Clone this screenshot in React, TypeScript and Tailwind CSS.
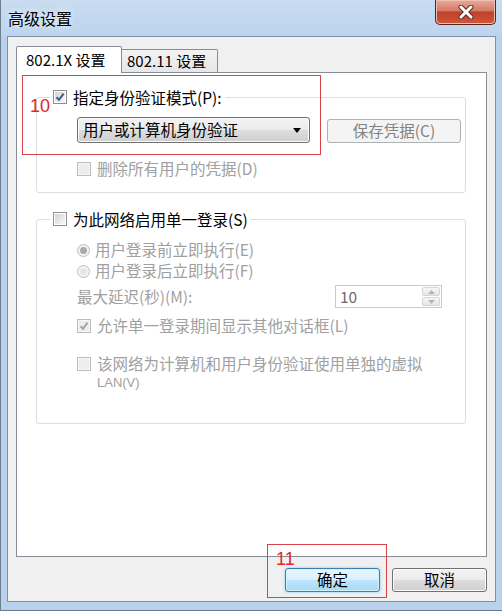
import React from 'react'

const FONT = '"Noto Sans CJK SC", "Liberation Sans", sans-serif'

function CheckBox({ checked = false, disabled = false }: { checked?: boolean; disabled?: boolean }) {
  return (
    <span
      className={`relative flex h-[14px] w-[14px] shrink-0 items-center justify-center border ${
        disabled ? 'border-[#bcbcbc] bg-[#f6f6f6]' : 'border-[#8e8f8f] bg-white'
      }`}
    >
      <span
        className={`h-[10px] w-[10px] ${
          disabled ? 'bg-[#ededed]' : 'bg-[linear-gradient(135deg,#d4d4d4,#f8f8f8)]'
        }`}
      />
      {checked && (
        <svg className="absolute left-0 top-0" width="12" height="12" viewBox="0 0 12 12">
          <path
            d="M2.5 6.2 L5 8.8 L9.6 2.6"
            fill="none"
            stroke={disabled ? '#a3a3a3' : '#3b5a91'}
            strokeWidth="2"
          />
        </svg>
      )}
    </span>
  )
}

function Radio({ checked = false }: { checked?: boolean }) {
  return (
    <span className="flex h-[13px] w-[13px] shrink-0 items-center justify-center rounded-full border border-[#bdbdbd] bg-[#f3f3f3]">
      <span
        className={`h-[7px] w-[7px] rounded-full ${checked ? 'bg-[#a9a9a9]' : 'bg-[#e6e6e6]'}`}
      />
    </span>
  )
}

export default function App() {
  return (
    <div
      className="relative flex h-[611px] w-[502px] flex-col overflow-hidden border-b border-l border-[#6c7d8f] bg-[#b9d2ec] text-[15.5px] text-black"
      style={{ fontFamily: FONT }}
    >
      {/* title bar */}
      <div className="flex h-[36px] shrink-0 items-start justify-between bg-[linear-gradient(#c9dcf0,#bcd4ee)] pl-[7px] pr-[6px]">
        <div className="mt-[8px] text-[16px] leading-[20px] [text-shadow:0_0_6px_#fff]">高级设置</div>
        <div className="flex h-[25px] w-[61px] items-center justify-center rounded-b-[5px] border border-t-0 border-[#5a2219] bg-[linear-gradient(#e9a99b,#d47a66_45%,#c0402a_50%,#d0573c)] shadow-[inset_0_0_0_1px_#eec0b4]">
          <svg width="16" height="14" viewBox="0 0 16 14">
            <path d="M3 2 L13 12 M13 2 L3 12" stroke="#5b2a22" strokeWidth="5" strokeLinecap="round" />
            <path d="M3 2 L13 12 M13 2 L3 12" stroke="#ffffff" strokeWidth="3" strokeLinecap="round" />
          </svg>
        </div>
      </div>

      {/* client area */}
      <div className="mx-[6px] mb-[8px] flex flex-1 flex-col border border-[#7f90a2] bg-[#f0f0f0] px-[8px] pb-[9px] pt-[9px]">
        {/* tabs */}
        <div className="relative z-10 mb-[-1px] flex h-[27px] items-end text-[15px]">
          <div className="flex h-[27px] w-[106px] items-center rounded-t-[2px] border border-b-0 border-[#898c95] bg-white pl-[9px] leading-[18px]">
            802.1X 设置
          </div>
          <div className="mb-[1px] flex h-[23px] w-[96px] items-center rounded-tr-[2px] border border-b-0 border-l-0 border-[#898c95] bg-[linear-gradient(#f3f3f3,#e6e6e6)] pl-[5px] leading-[18px]">
            802.11 设置
          </div>
        </div>

        {/* tab panel */}
        <div className="flex-1 border border-[#898c95] bg-white pl-[19px] pt-[15px]">
          <fieldset className="m-0 w-[430px] rounded-[3px] border border-[#d5dfe5] p-0">
            <legend className="ml-[13px] flex h-[18px] items-center gap-[6px] px-[3px] leading-[18px]">
              <CheckBox checked />
              <span>指定身份验证模式(P):</span>
            </legend>
            <div className="pb-[14px] pl-[40px] pt-[11px]">
              <div className="flex items-end gap-[17px]">
                <div className="flex h-[26px] w-[233px] items-center justify-between rounded-[3px] border border-[#707070] bg-[linear-gradient(#f2f2f2,#ebebeb_50%,#dddddd_50%,#cfcfcf)] pl-[5px] pr-[8px] shadow-[inset_0_0_0_1px_#fbfbfb]">
                  <span>用户或计算机身份验证</span>
                  <svg width="8" height="5" viewBox="0 0 8 5">
                    <path d="M0 0 H8 L4 5 Z" fill="#000" />
                  </svg>
                </div>
                <div className="flex h-[24px] w-[134px] items-center justify-center rounded-[3px] border border-[#adb2b5] bg-[#f4f4f4] text-[#838383]">
                  保存凭据(C)
                </div>
              </div>
              <div className="mt-[17px] flex h-[18px] items-center gap-[6px] text-[#a0a0a0]">
                <CheckBox disabled />
                <span>删除所有用户的凭据(D)</span>
              </div>
            </div>
          </fieldset>

          <fieldset className="m-0 mt-[17px] w-[430px] rounded-[3px] border border-[#d5dfe5] p-0">
            <legend className="ml-[13px] flex h-[18px] items-center gap-[6px] px-[3px] leading-[18px]">
              <CheckBox />
              <span>为此网络启用单一登录(S)</span>
            </legend>
            <div className="pb-[33px] pl-[40px] pr-[23px] pt-[13px] text-[#a0a0a0]">
              <div className="flex h-[18px] items-center gap-[5px]">
                <Radio checked />
                <span>用户登录前立即执行(E)</span>
              </div>
              <div className="mt-[3px] flex h-[18px] items-center gap-[5px]">
                <Radio />
                <span>用户登录后立即执行(F)</span>
              </div>
              <div className="mt-[5px] flex h-[23px] items-center justify-between">
                <span>最大延迟(秒)(M):</span>
                <div className="flex h-[23px] w-[107px] items-stretch border border-[#c9cbce] bg-white">
                  <span className="flex flex-1 items-center pl-[4px] text-[#6a6a6a]">10</span>
                  <div className="my-[1px] mr-[1px] flex w-[18px] flex-col gap-[1px]">
                    <div className="flex flex-1 items-center justify-center rounded-[2px] border border-[#d6d6d6] bg-[linear-gradient(#f6f6f6,#e6e6e6)]">
                      <svg width="7" height="4" viewBox="0 0 7 4">
                        <path d="M0 4 L3.5 0 L7 4 Z" fill="#b4b4b4" />
                      </svg>
                    </div>
                    <div className="flex flex-1 items-center justify-center rounded-[2px] border border-[#d6d6d6] bg-[linear-gradient(#f6f6f6,#e6e6e6)]">
                      <svg width="7" height="4" viewBox="0 0 7 4">
                        <path d="M0 0 H7 L3.5 4 Z" fill="#b4b4b4" />
                      </svg>
                    </div>
                  </div>
                </div>
              </div>
              <div className="mt-[9px] flex h-[18px] items-center gap-[6px]">
                <CheckBox checked disabled />
                <span>允许单一登录期间显示其他对话框(L)</span>
              </div>
              <div className="mt-[20px] flex items-start gap-[6px]">
                <span className="mt-[2px]">
                  <CheckBox disabled />
                </span>
                <div>
                  <div className="leading-[17px]">该网络为计算机和用户身份验证使用单独的虚拟</div>
                  <div
                    className="mt-[3px] text-[13px] leading-[15px]"
                    style={{ fontFamily: '"Liberation Sans", sans-serif' }}
                  >
                    LAN(V)
                  </div>
                </div>
              </div>
            </div>
          </fieldset>
        </div>

        {/* buttons */}
        <div className="mt-[11px] flex justify-end gap-[12px]">
          <div className="flex h-[24px] w-[95px] items-center justify-center rounded-[3px] border border-[#3c7fb1] bg-[linear-gradient(#eaf6fd,#d9f0fc_50%,#bee6fd_50%,#a7d9f5)] shadow-[inset_0_0_0_1px_#d3f0fd,0_0_3px_#7fd0f5]">
            确定
          </div>
          <div className="flex h-[24px] w-[95px] items-center justify-center rounded-[3px] border border-[#707070] bg-[linear-gradient(#f2f2f2,#ebebeb_50%,#dddddd_50%,#cfcfcf)] shadow-[inset_0_0_0_1px_#fbfbfb]">
            取消
          </div>
        </div>
      </div>

      {/* annotations */}
      <div className="pointer-events-none absolute left-[21px] top-[75px] h-[80px] w-[299px] border border-[#d8434a]" />
      <div
        className="absolute left-[29px] top-[95px] text-[18px] leading-[22px] text-[#e3262d]"
        style={{ fontFamily: '"Liberation Sans", sans-serif' }}
      >
        10
      </div>
      <div className="pointer-events-none absolute left-[266px] top-[544px] h-[54px] w-[120px] border border-[#d8434a]" />
      <div
        className="absolute left-[275px] top-[548px] text-[18px] leading-[22px] text-[#e3262d]"
        style={{ fontFamily: '"Liberation Sans", sans-serif' }}
      >
        11
      </div>
    </div>
  )
}
